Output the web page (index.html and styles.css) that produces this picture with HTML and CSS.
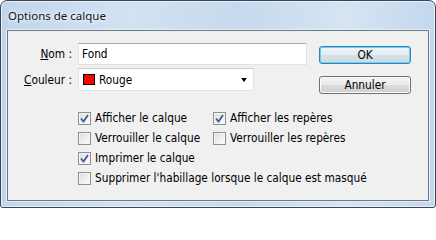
FILE: index.html
```html
<!DOCTYPE html>
<html lang="fr">
<head>
<meta charset="utf-8">
<title>Options de calque</title>
<link rel="stylesheet" href="styles.css">
</head>
<body>
<div class="window">
  <div class="titlebar"><span class="title">Options de calque</span></div>
  <div class="client">
    <div class="top">
      <div class="form">
        <label class="lbl"><u>N</u>om :</label>
        <div class="textbox">Fond</div>
        <label class="lbl"><u>C</u>ouleur :</label>
        <div class="combo">
          <span class="swatch"></span>
          <span class="combo-text">Rouge</span>
          <span class="arrow"></span>
        </div>
      </div>
      <div class="buttons">
        <div class="btn btn-default">OK</div>
        <div class="btn">Annuler</div>
      </div>
    </div>
    <div class="checks">
      <div class="chk"><span class="box checked"><svg viewBox="0 0 13 13" width="13" height="13"><path d="M3 6.5 L5.5 9.5 L10 3" fill="none" stroke="#3d5a98" stroke-width="1.8"/></svg></span>Afficher le calque</div>
      <div class="chk"><span class="box checked"><svg viewBox="0 0 13 13" width="13" height="13"><path d="M3 6.5 L5.5 9.5 L10 3" fill="none" stroke="#3d5a98" stroke-width="1.8"/></svg></span>Afficher les repères</div>
      <div class="chk"><span class="box"></span>Verrouiller le calque</div>
      <div class="chk"><span class="box"></span>Verrouiller les repères</div>
      <div class="chk wide"><span class="box checked"><svg viewBox="0 0 13 13" width="13" height="13"><path d="M3 6.5 L5.5 9.5 L10 3" fill="none" stroke="#3d5a98" stroke-width="1.8"/></svg></span>Imprimer le calque</div>
      <div class="chk wide"><span class="box"></span>Supprimer l'habillage lorsque le calque est masqué</div>
    </div>
  </div>
</div>
</body>
</html>
```
FILE: styles.css
```css
html, body {
  margin: 0;
  padding: 0;
  background: #ffffff;
}
.window {
  box-sizing: border-box;
  width: 436px;
  height: 208px;
  border: 1px solid #3b4654;
  border-radius: 7px 7px 3px 3px;
  background: linear-gradient(90deg, #c0d5ec 0%, #d3e2f2 30%, #c6d9ee 55%, #d6e4f3 80%, #c3d7ed 100%);
  box-shadow: inset 0 0 0 1px #e8f0f9;
  display: flex;
  flex-direction: column;
  font-family: "DejaVu Sans Condensed", "DejaVu Sans", sans-serif;
  font-size: 11.75px;
  color: #000;
}
.titlebar {
  height: 28px;
  display: flex;
  align-items: center;
  padding-left: 7px;
  padding-bottom: 1px;
}
.title {
  font-family: "Noto Sans", "Open Sans", sans-serif;
  font-size: 11.5px;
  color: #111;
  text-shadow: 0 0 6px #ffffff, 0 0 3px #ffffff;
}
.client {
  margin: 0 6px 6px 6px;
  flex: 1;
  border: 1px solid #6b7888;
  background: #f0f0f0;
  box-shadow: 0 0 0 1px #e6eef8;
  padding: 12px 0 0 0;
}
.top {
  display: flex;
  align-items: flex-start;
}
.form {
  display: grid;
  grid-template-columns: 64px 229px;
  grid-template-rows: 22px 23px;
  column-gap: 6px;
  row-gap: 3px;
}
.lbl {
  text-align: right;
  align-self: center;
  white-space: nowrap;
}
.textbox {
  box-sizing: border-box;
  background: #fff;
  border: 1px solid #dfe3e8;
  border-top-color: #abadb3;
  padding-left: 3px;
  display: flex;
  align-items: center;
}
.combo {
  box-sizing: border-box;
  width: 176px;
  background: #fff;
  border: 1px solid #dfe3e8;
  border-top-color: #c9ccd1;
  display: flex;
  align-items: center;
  padding-left: 4px;
}
.swatch {
  box-sizing: border-box;
  width: 12px;
  height: 11px;
  background: #ff0000;
  border: 1px solid #000;
  margin-right: 4px;
}
.combo-text {
  flex: 1;
}
.arrow {
  width: 0;
  height: 0;
  border-left: 3.5px solid transparent;
  border-right: 3.5px solid transparent;
  border-top: 4px solid #000;
  margin-right: 6px;
  margin-top: 1px;
}
.buttons {
  margin-left: 12px;
  margin-top: 3px;
  display: flex;
  flex-direction: column;
  gap: 12px;
}
.btn {
  box-sizing: border-box;
  width: 92px;
  height: 18px;
  border: 1px solid #707070;
  border-radius: 3px;
  background: linear-gradient(#f2f2f2 0%, #ebebeb 50%, #dddddd 50%, #cfcfcf 100%);
  box-shadow: inset 0 0 0 1px #fcfcfc;
  display: flex;
  align-items: center;
  justify-content: center;
}
.btn-default {
  border-color: #3c7fb1;
  background: linear-gradient(#eef3f6 0%, #e4ecf0 50%, #d6e1e6 50%, #cdd9df 100%);
  box-shadow: inset 0 0 0 1px #62d2f7;
}
.checks {
  margin-top: 14px;
  padding-left: 70px;
  display: grid;
  grid-template-columns: 135px auto;
  grid-auto-rows: 20px;
}
.chk {
  display: flex;
  align-items: center;
  white-space: nowrap;
}
.chk.wide {
  grid-column: 1 / 3;
}
.box {
  box-sizing: border-box;
  width: 13px;
  height: 13px;
  border: 1px solid #8e8f8f;
  background: linear-gradient(135deg, #dcdcdc 0%, #f4f4f4 70%, #fbfbfb 100%);
  box-shadow: inset 0 0 0 1px #f4f4f4;
  margin-right: 4px;
  position: relative;
  flex: none;
}
.box svg {
  position: absolute;
  left: -1px;
  top: -1px;
}
```
